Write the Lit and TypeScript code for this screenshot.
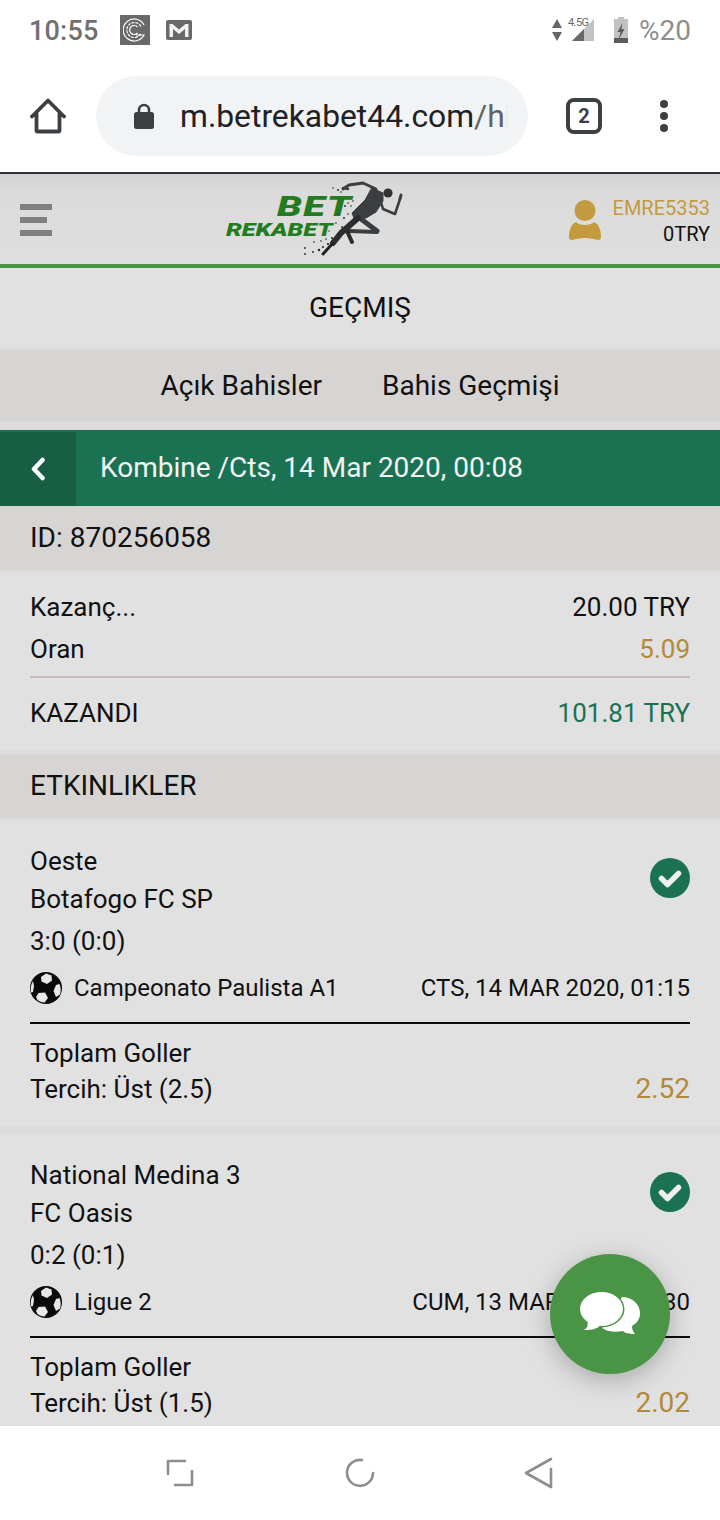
import { LitElement, html, css, svg } from "lit";
import { customElement } from "lit/decorators.js";

interface Ev { home: string; away: string; score: string; league: string; date: string; market: string; pick: string; odd: string; }
const events: Ev[] = [
  { home: "Oeste", away: "Botafogo FC SP", score: "3:0 (0:0)", league: "Campeonato Paulista A1", date: "CTS, 14 MAR 2020, 01:15", market: "Toplam Goller", pick: "Tercih: Üst (2.5)", odd: "2.52" },
  { home: "National Medina 3", away: "FC Oasis", score: "0:2 (0:1)", league: "Ligue 2", date: "CUM, 13 MAR 2020, 23:30", market: "Toplam Goller", pick: "Tercih: Üst (1.5)", odd: "2.02" },
];

const ball = svg`<svg width="32" height="32" viewBox="0 0 32 32" style="flex:none">
  <circle cx="16" cy="16" r="16" fill="#0a0a0a"/>
  <path d="M11 5l5-3.500 5.500 2 .5 5-5 3.500-5.500-2.500z" fill="#e8e8e8"/>
  <path d="M26 13l3.500-1c1.500 3.500 1.500 7 .5 10.500L26 25l-2.500-6z" fill="#e8e8e8"/>
  <path d="M8.500 21l6.500-.5 3 5.500-3.500 4.500c-3-.2-5-1-7-2.500L6 25z" fill="#e8e8e8"/>
  <path d="M3 9l1 5-1 6-2 .5C.3 16 1 12 3 9z" fill="#e8e8e8"/>
</svg>`;

const check = svg`<svg width="40" height="40" viewBox="0 0 40 40">
  <circle cx="20" cy="20" r="20" fill="#1b7252"/>
  <path d="M11.500 20.500l6 6 11-11" fill="none" stroke="#efefef" stroke-width="5.500" stroke-linejoin="round" stroke-linecap="round"/>
</svg>`;

const specks: [number, number, number][] = [
  [113, 12, .8], [118, 14, .9], [121, 16, .8], [128, 27, .8], [133, 25, .8], [125, 30, .9], [131, 30, .8], [118, 38, .7],
  [124, 42, .9], [128, 38, .8], [116, 47, .8], [122, 51, .9], [118, 58, .9], [109, 55, .7], [112, 62, 1], [106, 63, .8],
  [101, 65, .8], [94, 66, .8], [103, 71, 1], [99, 74, 1.200], [85, 72, .9], [85, 78, .9], [93, 76, .9], [108, 68, 1.100],
];

@customElement("app-root")
export class AppRoot extends LitElement {
  static styles = css`
    :host { display: block; width: 720px; height: 1520px; font-family: Roboto, "Liberation Sans", sans-serif; color: #111; background: #fff; }
    .frame { position: relative; width: 720px; height: 1520px; display: flex; flex-direction: column; overflow: hidden; }
    .status { height: 60px; flex: none; display: flex; align-items: center; padding: 0 29px 0 29px; box-sizing: border-box; position: relative; }
    .time { font-size: 27px; font-weight: 500; color: #707070; width: 91px; letter-spacing: .2px; margin-top: 2px; }
    .cbox { width: 30px; height: 30px; background: #696969; display: flex; align-items: center; justify-content: center; margin-right: 16px; }
    .spacer { flex: 1; }
    .pct { font-size: 28px; color: #8e8e8e; margin-left: 11px; margin-top: 1px; }
    .g45 { position: absolute; left: 568px; top: 16px; font-size: 11px; color: #666; letter-spacing: -.6px; }
    .chrome { height: 112px; flex: none; display: flex; align-items: center; padding: 0 0 0 30px; box-sizing: border-box; }
    .pill { width: 432px; height: 80px; border-radius: 40px; background: #f1f3f4; margin-left: 30px; display: flex; align-items: center; padding-left: 38px; box-sizing: border-box; flex: none; }
    .url { margin-left: 26px; width: 328px; overflow: hidden; white-space: nowrap; font-size: 31.800px; color: #202124; position: relative; }
    .url span { color: #5f6368; }
    .url::after { content: ""; position: absolute; right: 0; top: 0; bottom: 0; width: 4px; background: linear-gradient(90deg, rgba(241,243,244,0), #f1f3f4); }
    .tabs-btn { width: 36px; height: 36px; border: 4px solid #3c4043; border-radius: 8px; box-sizing: border-box; margin-left: 38px; display: flex; align-items: center; justify-content: center; font-size: 20px; font-weight: 700; color: #3c4043; flex: none; }
    .dots { margin-left: 58px; display: flex; flex-direction: column; gap: 4px; flex: none; }
    .dots i { width: 8px; height: 8px; border-radius: 50%; background: #3c4043; display: block; }
    .page { flex: 1; min-height: 0; overflow: hidden; background: #dcdcdc; border-top: 2px solid #2c3038; display: flex; flex-direction: column; }
    .head { height: 90px; flex: none; display: flex; align-items: center; padding: 0 10px 0 20px; background: linear-gradient(#d2d2d2, #dbdbdb 20%, #dedede); position: relative; border-bottom: 4px solid #4a9545; }
    .burger { width: 32px; display: flex; flex-direction: column; gap: 7px; margin-top: 2px; }
    .burger i { display: block; height: 6px; background: #808080; }
    .burger i:nth-child(2) { width: 27px; }
    .logo { position: absolute; left: 220px; top: 2px; width: 190px; height: 88px; }
    .bet { position: absolute; left: 57px; top: 17.500px; transform-origin: left top; transform: scaleX(1.420); font: italic 900 28px/26px Roboto, sans-serif; color: #237c1f; letter-spacing: 1px; }
    .rek { position: absolute; left: 6px; top: 45px; transform-origin: left top; transform: scaleX(1.320); font: italic 900 19px/17px Roboto, sans-serif; color: #237c1f; }
    .runner { position: absolute; left: 0; top: 0; }
    .user { margin-left: auto; display: flex; align-items: center; gap: 12px; }
    .uicon { margin-top: 2px; }
    .uname { text-align: right; font-size: 20px; line-height: 26px; margin-top: 4px; }
    .gold { color: #c49a3f; }
    .title { height: 80px; flex: none; display: flex; align-items: center; justify-content: center; font-size: 28px; background: #e1e1e1; box-sizing: border-box; padding-bottom: 2px; }
    .tabs { height: 72px; flex: none; margin-top: 2px; background: #d6d5d3; display: flex; align-items: center; justify-content: center; gap: 60px; font-size: 28px; box-sizing: border-box; padding-bottom: 2px; }
    .bar { height: 76px; flex: none; margin-top: 8px; background: #1b7252; color: #f4f4f4; display: flex; align-items: center; font-size: 28px; }
    .bar span { margin-bottom: 2px; }
    .back { width: 76px; height: 74px; margin-top: 2px; background: #175e44; display: flex; align-items: center; justify-content: center; margin-right: 24px; }
    .idrow { height: 64px; flex: none; display: flex; align-items: center; padding: 0 30px 2px; box-sizing: border-box; background: #d6d5d3; font-size: 28px; }
    .stats { height: 178px; flex: none; margin-top: 2px; box-sizing: border-box; padding: 14px 30px 0; font-size: 26px; background: #e1e1e1; }
    .row { display: flex; justify-content: space-between; align-items: center; }
    .stats .r1 { height: 42px; }
    .stats .r2 { height: 42px; }
    .sep { height: 2px; background: #c9bcbc; margin: 6px 0 0; }
    .stats .r3 { height: 70px; }
    .odd { color: #b3893a; }
    .green { color: #1b7252; }
    .sec { height: 64px; flex: none; margin-top: 4px; background: #d6d5d3; display: flex; align-items: center; padding: 0 30px 2px; box-sizing: border-box; font-size: 28px; }
    .ev { flex: none; height: 306px; box-sizing: border-box; margin-top: 2px; padding: 22px 30px 0; background: #e1e1e1; margin-bottom: 6px; font-size: 26px; }
    .teamrow { display: flex; justify-content: space-between; align-items: flex-start; }
    .line { line-height: 38px; }
    .score { line-height: 38px; margin-top: 4px; }
    .chk { margin-top: 16px; height: 40px; }
    .meta { display: flex; align-items: center; height: 32px; margin-top: 12px; font-size: 24px; }
    .meta .lg { margin-left: 12px; flex: 1; }
    .rule { height: 2px; background: #0c0c0c; margin-top: 18px; }
    .mk { line-height: 36px; margin-top: 11px; }
    .pick { display: flex; justify-content: space-between; line-height: 36px; align-items: center; }
    .pick .odd { font-size: 28px; }
    .nav { height: 94px; flex: none; background: #fff; display: flex; align-items: center; padding-left: 166px; box-sizing: border-box; gap: 151px; }
    .fab { position: absolute; left: 550px; top: 1254px; width: 120px; height: 120px; border-radius: 50%; background: #4a9545; box-shadow: 0 6px 26px rgba(0,0,0,.25); display: flex; align-items: center; justify-content: center; }
  `;

  render() {
    return html`<div class="frame">
      <div class="status">
        <span class="time">10:55</span>
        <span class="cbox"><svg width="24" height="24" viewBox="0 0 24 24" fill="none" stroke="#fff" stroke-width="1.200"><path d="M21 7A11 11 0 1 0 21 17H13"/><path d="M18 8.500A7.500 7.500 0 1 0 18 15.500" stroke-dasharray="3 1"/><path d="M14.500 9A4.500 4.500 0 1 0 14.500 15"/></svg></span>
        <svg width="26" height="20" viewBox="0 0 26 20"><rect width="26" height="20" rx="2" fill="#696969"/><path d="M3.500 17V4h3L13 9.500 19.500 4h3V17h-3.500V9L13 14 7 9V17z" fill="#f2f2f2"/></svg>
        <span class="spacer"></span>
        <svg width="10" height="22" viewBox="0 0 10 22" style="margin-right:10px"><path d="M5 0l5 9H0zM0 13h10l-5 9z" fill="#666"/></svg>
        <svg width="22" height="22" viewBox="0 0 22 22" style="margin-right:20px"><path d="M22 0v22H0z" fill="#c2c2c2"/><path d="M12 10v12H0z" fill="#666"/></svg>
        <span class="g45">4.5G</span>
        <svg width="14" height="26" viewBox="0 0 14 26"><path d="M4 0h6v2h4v24H0V2h4z" fill="#c2c2c2"/><path d="M0 21h14v5H0z" fill="#5c5c5c"/><path d="M8.500 6L3.500 15H6.500L4.500 23 10.500 12H7.500z" fill="#5c5c5c"/></svg>
        <span class="pct">%20</span>
      </div>
      <div class="chrome">
        <svg width="36" height="36" viewBox="0 0 36 36"><path d="M2 18.500L18 2.500l16 16M6.500 15v17.500a1 1 0 0 0 1 1h21a1 1 0 0 0 1-1V15" fill="none" stroke="#3c4043" stroke-width="3.800" stroke-linejoin="round" stroke-linecap="round"/></svg>
        <div class="pill">
          <svg width="20" height="26" viewBox="0 0 20 26" style="flex:none"><path d="M5 11V7a5 5 0 0 1 10 0v4" fill="none" stroke="#3c4043" stroke-width="2.500"/><rect x="0" y="9" width="20" height="17" rx="2.500" fill="#3c4043"/></svg>
          <div class="url">m.betrekabet44.com<span>/hi</span></div>
        </div>
        <div class="tabs-btn">2</div>
        <div class="dots"><i></i><i></i><i></i></div>
      </div>
      <div class="page">
        <div class="head">
          <div class="burger"><i></i><i></i><i></i></div>
          <div class="logo">
            <span class="bet">BET</span>
            <span class="rek">REKABET</span>
            <svg class="runner" width="190" height="88" viewBox="0 0 190 88" fill="none" stroke="#3b3e41" stroke-linecap="round" stroke-linejoin="round">
              <path d="M123 13l6-4 14-2 13 6" stroke-width="3"/>
              <path d="M123 12l5 1" stroke-width="2.500"/>
              <path d="M152 12l11 5v8l-7 11-10 6-12 0-2-5 13-13z" fill="#3b3e41" stroke-width="1"/>
              <circle cx="168" cy="17" r="4.600" fill="#333" stroke="none"/>
              <path d="M160 23l3 10 12 5 5-15" stroke-width="2.600"/>
              <path d="M180 23l1-4" stroke-width="3"/>
              <path d="M137 40l20 15" stroke-width="5"/>
              <path d="M157 56l-28-1" stroke-width="4"/>
              <path d="M127 55l5 11" stroke-width="4" stroke="#2a2c2e"/>
              <path d="M138 42l-17 15-8 10" stroke-width="6" stroke="#2a2c2e"/>
              <path d="M113 67l-10 11" stroke-width="3" stroke="#222"/>
              <g fill="#222" stroke="none">${specks.map(([x, y, r]) => svg`<circle cx=${x} cy=${y} r=${r}/>`)}</g>
            </svg>
          </div>
          <div class="user">
            <svg class="uicon" width="32" height="40" viewBox="0 0 32 40"><circle cx="16" cy="10.500" r="10.500" fill="#c49a3f"/><path d="M0 37c0-7 2-13 7-15 3 4 15 4 18 0 5 2 7 8 7 15 0 2-1 3-3 3-4-1-8-2-13-2s-9 1-13 2c-2 0-3-1-3-3z" fill="#c49a3f"/></svg>
            <div class="uname"><div class="gold">EMRE5353</div><div>0TRY</div></div>
          </div>
        </div>
        <div class="title">GEÇMIŞ</div>
        <div class="tabs"><span>Açık Bahisler</span><span>Bahis Geçmişi</span></div>
        <div class="bar">
          <div class="back"><svg width="16" height="24" viewBox="0 0 16 24"><path d="M12.500 3L4 12l8.500 9" fill="none" stroke="#fff" stroke-width="4.500" stroke-linecap="round" stroke-linejoin="round"/></svg></div>
          <span>Kombine /Cts, 14 Mar 2020, 00:08</span>
        </div>
        <div class="idrow">ID: 870256058</div>
        <div class="stats">
          <div class="row r1"><span>Kazanç...</span><span>20.00 TRY</span></div>
          <div class="row r2"><span>Oran</span><span class="odd">5.09</span></div>
          <div class="sep"></div>
          <div class="row r3"><span>KAZANDI</span><span class="green">101.81 TRY</span></div>
        </div>
        <div class="sec">ETKINLIKLER</div>
        ${events.map((e) => html`<div class="ev">
          <div class="teamrow">
            <div><div class="line">${e.home}</div><div class="line">${e.away}</div><div class="score">${e.score}</div></div>
            <div class="chk">${check}</div>
          </div>
          <div class="meta">${ball}<span class="lg">${e.league}</span><span>${e.date}</span></div>
          <div class="rule"></div>
          <div class="mk">${e.market}</div>
          <div class="pick"><span>${e.pick}</span><span class="odd">${e.odd}</span></div>
        </div>`)}
      </div>
      <div class="nav">
        <svg width="28" height="28" viewBox="0 0 28 28" fill="none" stroke="#8e8e8e" stroke-width="2.600" stroke-linecap="round" stroke-linejoin="round"><path d="M2 15V2h17M26 12v14H9"/></svg>
        <svg width="30" height="30" viewBox="0 0 30 30" fill="none" stroke="#8e8e8e" stroke-width="2.600" stroke-linecap="round"><path d="M17 2A13 13 0 1 0 28 15"/></svg>
        <svg width="30" height="32" viewBox="0 0 30 32" fill="none" stroke="#8e8e8e" stroke-width="2.600" stroke-linecap="round" stroke-linejoin="round" style="margin-left:-2px"><path d="M27 2L2 16l25 14V12"/></svg>
      </div>
      <div class="fab">
        <svg width="60" height="44" viewBox="0 0 60 44" fill="#fff">
          <path d="M42 5c10 0 18 7 18 16 0 6-3 10-8 13 0 3 1 6 3 8-4 0-9 0-12-3-5 1-10 1-14 0-3-.5-5-2-7-3z"/>
          <ellipse cx="21.500" cy="17" rx="23" ry="18.500" fill="#4a9545"/>
          <ellipse cx="21.500" cy="17" rx="21.500" ry="17"/>
          <path d="M8 28l-.5 6c-.5 2-2 3-4 4 5 0 13 0 17-5z"/>
        </svg>
      </div>
    </div>`;
  }
}
